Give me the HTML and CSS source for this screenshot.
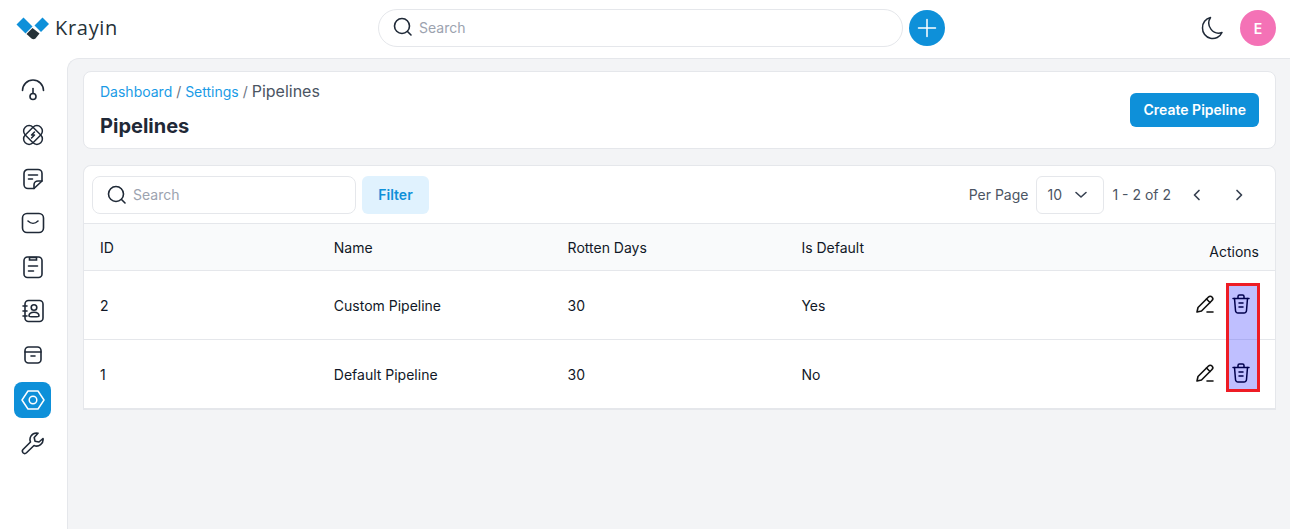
FILE: index.html
```html
<!DOCTYPE html>
<html>
  <head>
    <meta charset="UTF-8" />
    <title>Pipelines</title>
    <link rel="stylesheet" href="styles.css">
  </head>
  <body>
    <header class="topbar">
      <div class="logo">
        <svg class="logo-mark" width="34" height="24" viewBox="0 0 34 24">
          <path d="M0.500 8.500 L7.500 1.500 L16.500 10.500 L9.500 17.500 Z" fill="#0e90d9" />
          <path d="M18.500 9.500 L26.500 1.500 L33 8 L25 16 Z" fill="#0e90d9" />
          <path d="M10.500 18 L16.500 12 L23.500 17.500 L19.500 22.500 Q17.500 24 15.500 22.500 Z" fill="#263238" />
        </svg>
        <span class="logo-text">Krayin</span>
      </div>
      <div class="top-search">
        <svg width="24" height="24" viewBox="0 0 24 24" fill="none" stroke="#1f2937" stroke-width="1.600" stroke-linecap="round"><circle cx="11" cy="11" r="7.500" /><path d="M16.500 16.500l3.500 3.500" /></svg>
        <span class="placeholder">Search</span>
      </div>
      <div class="plus-btn">
        <svg width="24" height="24" viewBox="0 0 24 24" fill="none" stroke="#fff" stroke-width="1.500" stroke-linecap="round"><path d="M12 3.500v17M3.500 12h17" /></svg>
      </div>
      <div class="top-right">
        <svg class="moon" width="26" height="26" viewBox="0 0 26 26" fill="none" stroke="#1f2937" stroke-width="1.500" stroke-linejoin="round"><path d="M11.500 3.500 A10 10 0 0 0 23 18.500 A10.200 10.200 0 0 1 3.500 14 A10.200 10.200 0 0 1 11.500 3.500 Z" /></svg>
        <div class="avatar">E</div>
      </div>
    </header>

    <div class="layout">
      <nav class="sidebar">
        <div class="nav-item">
          <svg width="24" height="24" viewBox="0 0 24 24" fill="none" stroke="#1f2937" stroke-width="1.600" stroke-linecap="round"><path d="M1.500 11.500a10.500 10.500 0 0 1 21 0" /><path d="M12 9.500v5" /><circle cx="12" cy="17.500" r="3" /></svg>
        </div>
        <div class="nav-item">
          <svg width="24" height="24" viewBox="0 0 24 24" fill="none" stroke="#1f2937" stroke-width="1.500" stroke-linecap="round" stroke-linejoin="round"><rect x="1" y="6.500" width="22" height="11" rx="5.500" transform="rotate(45 12 12)" /><rect x="1" y="6.500" width="22" height="11" rx="5.500" transform="rotate(-45 12 12)" /><path d="M13.500 9l-3 3h3l-3 3" /></svg>
        </div>
        <div class="nav-item">
          <svg width="24" height="24" viewBox="0 0 24 24" fill="none" stroke="#1f2937" stroke-width="1.600" stroke-linecap="round" stroke-linejoin="round"><path d="M13 21.500H7a4 4 0 0 1-4-4V6.500a4 4 0 0 1 4-4h10a4 4 0 0 1 4 4V14l-8 7.500z" /><path d="M13 21.500V18a4 4 0 0 1 4-4h4" /><path d="M7.500 8h9M7.500 12h4" /></svg>
        </div>
        <div class="nav-item">
          <svg width="24" height="24" viewBox="0 0 24 24" fill="none" stroke="#1f2937" stroke-width="1.600" stroke-linecap="round"><rect x="1.500" y="2.500" width="21" height="19" rx="4.500" /><path d="M7 10c3 3 7 3 10 0" /></svg>
        </div>
        <div class="nav-item">
          <svg width="24" height="24" viewBox="0 0 24 24" fill="none" stroke="#1f2937" stroke-width="1.600" stroke-linecap="round"><rect x="3" y="2" width="18" height="20.500" rx="3.500" /><path d="M8.500 2.500h7v2.500h-7z" /><path d="M7.500 11h9M7.500 16h5" /></svg>
        </div>
        <div class="nav-item">
          <svg width="24" height="24" viewBox="0 0 24 24" fill="none" stroke="#1f2937" stroke-width="1.600" stroke-linecap="round"><rect x="4" y="1.500" width="18" height="21" rx="3.500" /><circle cx="13" cy="8.500" r="2.800" /><path d="M8 17c0-5 10-5 10 0 0 1-10 1-10 0z" /><path d="M2 7h4M2 12h4M2 17h4" /></svg>
        </div>
        <div class="nav-item">
          <svg width="24" height="24" viewBox="0 0 24 24" fill="none" stroke="#1f2937" stroke-width="1.600" stroke-linecap="round"><rect x="4" y="4" width="16" height="16" rx="3.500" /><path d="M4 9h16M10 13h4" /></svg>
        </div>
        <div class="nav-item active">
          <svg width="24" height="24" viewBox="0 0 24 24" fill="none" stroke="#fff" stroke-width="1.500" stroke-linejoin="round"><path d="M7 3h10l6 9-6 9H7l-6-9z" /><circle cx="12" cy="12" r="3.800" /></svg>
        </div>
        <div class="nav-item">
          <svg width="24" height="24" viewBox="0 0 24 24" fill="none" stroke="#1f2937" stroke-width="1.600" stroke-linejoin="round"><path d="M15.500 2a6.500 6.500 0 0 0-6 9L2 18.500a2.500 2.500 0 0 0 0 3.200 2.500 2.500 0 0 0 3.500 0L13 14.500a6.500 6.500 0 0 0 9-7l-4 3.500-4-.8-.8-3.700L17 2.200z" /></svg>
        </div>
      </nav>

      <main class="content">
        <section class="card page-head">
          <div>
            <div class="breadcrumb">
              <a>Dashboard</a> / <a>Settings</a> / <span class="current">Pipelines</span>
            </div>
            <h1>Pipelines</h1>
          </div>
          <button class="primary-btn">Create Pipeline</button>
        </section>

        <section class="card table-card">
          <div class="toolbar">
            <div class="toolbar-left">
              <div class="table-search">
                <svg width="24" height="24" viewBox="0 0 24 24" fill="none" stroke="#1f2937" stroke-width="1.600" stroke-linecap="round"><circle cx="11" cy="11" r="7.500" /><path d="M16.500 16.500l3.500 3.500" /></svg>
                <span class="placeholder">Search</span>
              </div>
              <button class="filter-btn">Filter</button>
            </div>
            <div class="toolbar-right">
              <span>Per Page</span>
              <div class="per-page">
                <span>10</span>
                <svg width="16" height="16" viewBox="0 0 16 16" fill="none" stroke="#374151" stroke-width="1.600" stroke-linecap="round" stroke-linejoin="round"><path d="M3 5.500l5 4.500 5-4.500" /></svg>
              </div>
              <span>1 - 2 of 2</span>
              <div class="pager">
                <svg width="24" height="24" viewBox="0 0 24 24" fill="none" stroke="#374151" stroke-width="1.700" stroke-linecap="round" stroke-linejoin="round"><path d="M14 7.500L9.500 12l4.500 4.500" /></svg>
                <svg width="24" height="24" viewBox="0 0 24 24" fill="none" stroke="#374151" stroke-width="1.700" stroke-linecap="round" stroke-linejoin="round"><path d="M10 7.500l4.500 4.500-4.500 4.500" /></svg>
              </div>
            </div>
          </div>

          <div class="grid-row grid-head">
            <span>ID</span>
            <span>Name</span>
            <span>Rotten Days</span>
            <span>Is Default</span>
            <span class="actions-title">Actions</span>
          </div>
          <div class="grid-row">
            <span>2</span>
            <span>Custom Pipeline</span>
            <span>30</span>
            <span>Yes</span>
            <div class="actions">
              <svg width="24" height="24" viewBox="0 0 24 24" fill="none" stroke="#111" stroke-width="1.600" stroke-linecap="round" stroke-linejoin="round"><path d="M4 20l1-4.500L15.500 5a2.400 2.400 0 0 1 3.500 3.500L8.500 19z" /><path d="M13.500 7l3.500 3.500M14 20h6" /></svg>
              <svg class="trash" width="24" height="24" viewBox="0 0 24 24" fill="none" stroke="#00004d" stroke-width="1.500" stroke-linecap="round" stroke-linejoin="round"><path d="M4 6.500h16M9 6V4.500A1.500 1.500 0 0 1 10.500 3h3A1.500 1.500 0 0 1 15 4.500V6" /><path d="M5.500 6.500l1 12A2.500 2.500 0 0 0 9 21h6a2.500 2.500 0 0 0 2.500-2.500l1-12" /><path d="M10 11h4M10 15h4" /></svg>
            </div>
          </div>
          <div class="grid-row">
            <span>1</span>
            <span>Default Pipeline</span>
            <span>30</span>
            <span>No</span>
            <div class="actions">
              <svg width="24" height="24" viewBox="0 0 24 24" fill="none" stroke="#111" stroke-width="1.600" stroke-linecap="round" stroke-linejoin="round"><path d="M4 20l1-4.500L15.500 5a2.400 2.400 0 0 1 3.500 3.500L8.500 19z" /><path d="M13.500 7l3.500 3.500M14 20h6" /></svg>
              <svg class="trash" width="24" height="24" viewBox="0 0 24 24" fill="none" stroke="#00004d" stroke-width="1.500" stroke-linecap="round" stroke-linejoin="round"><path d="M4 6.500h16M9 6V4.500A1.500 1.500 0 0 1 10.500 3h3A1.500 1.500 0 0 1 15 4.500V6" /><path d="M5.500 6.500l1 12A2.500 2.500 0 0 0 9 21h6a2.500 2.500 0 0 0 2.500-2.500l1-12" /><path d="M10 11h4M10 15h4" /></svg>
            </div>
          </div>
          <div class="highlight"></div>
        </section>
      </main>
    </div>
  </body>
</html>
```

FILE: styles.css
```css
* {
  box-sizing: border-box;
}
body {
  margin: 0;
  height: 529px;
  overflow: hidden;
  background-color: white;
  font-family: "Inter", "Liberation Sans", sans-serif;
  font-size: 14px;
  color: #111827;
}
svg {
  display: block;
  flex-shrink: 0;
}
.topbar {
  display: flex;
  align-items: center;
  height: 58px;
  padding: 0 14px 2px 16px;
}
.logo {
  display: flex;
  align-items: center;
  gap: 5px;
  width: 362px;
}
.logo-text {
  font-family: "Open Sans", sans-serif;
  font-size: 20px;
  font-weight: 500;
  letter-spacing: 0.7px;
  color: #263238;
  margin-top: -2px;
}
.top-search {
  display: flex;
  align-items: center;
  gap: 4px;
  width: 525px;
  height: 38px;
  padding: 0 0 2px 12px;
  border: 1px solid #e5e7eb;
  border-radius: 19px;
}
.placeholder {
  color: #9ca3af;
}
.plus-btn {
  display: flex;
  align-items: center;
  justify-content: center;
  width: 36px;
  height: 36px;
  margin-left: 6px;
  border-radius: 50%;
  background-color: #0e90d9;
}
.top-right {
  display: flex;
  align-items: center;
  gap: 15px;
  margin-left: auto;
}
.moon {
  margin-top: -3px;
}
.avatar {
  display: flex;
  align-items: center;
  justify-content: center;
  width: 36px;
  height: 36px;
  border-radius: 50%;
  background-color: #f472b6;
  color: white;
  font-weight: 600;
}
.layout {
  display: flex;
  height: 471px;
}
.sidebar {
  display: flex;
  flex-direction: column;
  align-items: center;
  gap: 8px;
  width: 67px;
  padding: 15px 2px 0 0;
  flex-shrink: 0;
}
.nav-item {
  display: flex;
  align-items: center;
  justify-content: center;
  width: 37px;
  height: 36px;
  border-radius: 8px;
}
.nav-item.active {
  background-color: #0e90d9;
  margin: 1px 0 -1px;
}
.content {
  flex: 1;
  padding: 12px 14px 0 15px;
  background-color: #f3f4f6;
  border-top: 1px solid #e5e7eb;
  border-left: 1px solid #e5e7eb;
  border-top-left-radius: 12px;
}
.card {
  background-color: white;
  border: 1px solid #e5e7eb;
  border-radius: 8px;
}
.page-head {
  display: flex;
  align-items: center;
  justify-content: space-between;
  height: 78px;
  padding: 0 16px;
}
.breadcrumb {
  margin-top: 1px;
  color: #6b7280;
  line-height: 20px;
}
.breadcrumb a {
  color: #1a9be6;
}
.current {
  font-size: 16px;
  color: #4b5563;
}
h1 {
  margin: 10px 0 1px;
  font-size: 20px;
  line-height: 28px;
  font-weight: 700;
  color: #1f2937;
}
.primary-btn {
  height: 34px;
  padding: 0 13px 2px;
  border: 0;
  border-radius: 6px;
  background-color: #0e90d9;
  color: white;
  font: 600 14px "Inter", sans-serif;
}
.table-card {
  position: relative;
  margin-top: 16px;
  height: 245px;
  border-bottom-width: 2px;
  border-radius: 8px 8px 0 0;
  overflow: hidden;
}
.toolbar {
  display: flex;
  align-items: center;
  justify-content: space-between;
  height: 58px;
  padding: 0 8px;
  border-bottom: 1px solid #e5e7eb;
}
.toolbar-left,
.toolbar-right {
  display: flex;
  align-items: center;
  gap: 6px;
}
.toolbar-right {
  gap: 8px;
  color: #4b5563;
}
.table-search {
  display: flex;
  align-items: center;
  gap: 4px;
  width: 264px;
  height: 38px;
  padding-left: 12px;
  border: 1px solid #e5e7eb;
  border-radius: 8px;
}
.filter-btn {
  width: 67px;
  height: 38px;
  border: 0;
  border-radius: 6px;
  background-color: #e0f2fe;
  color: #0e90d9;
  font: 600 14px "Inter", sans-serif;
}
.per-page {
  display: flex;
  align-items: center;
  justify-content: space-between;
  width: 68px;
  height: 38px;
  padding: 0 14px 0 10px;
  border: 1px solid #e5e7eb;
  border-radius: 6px;
}
.pager {
  display: flex;
  gap: 18px;
  margin: 0 16px 0 6px;
}
.grid-row {
  display: grid;
  grid-template-columns: repeat(5, 1fr);
  gap: 10px;
  align-items: center;
  height: 69px;
  padding: 0 16px;
  border-bottom: 1px solid #e5e7eb;
}
.grid-head {
  height: 47px;
  background-color: #f9fafb;
  color: #111827;
}
.actions-title {
  justify-self: end;
  padding-top: 8px;
}
.actions {
  display: flex;
  justify-content: flex-end;
  gap: 12px;
  margin-top: -2px;
  padding-right: 6px;
}
.trash {
  position: relative;
  z-index: 1;
}
.highlight {
  position: absolute;
  left: 1142px;
  top: 117px;
  width: 34px;
  height: 109px;
  border: 3px solid #ee1c25;
  background-color: rgba(60, 60, 255, 0.33);
}
```
